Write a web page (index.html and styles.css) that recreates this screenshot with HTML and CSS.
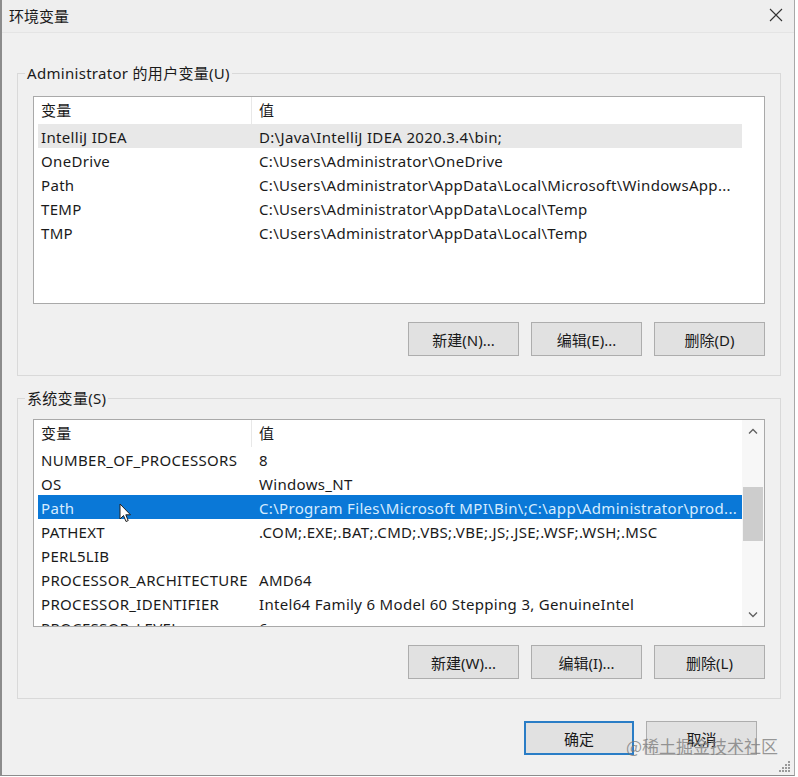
FILE: index.html
```html
<!DOCTYPE html>
<html lang="zh-CN">
<head>
<meta charset="utf-8">
<title>环境变量</title>
<link rel="stylesheet" href="styles.css">
</head>
<body>
<div class="window">
  <div class="titlebar">
    <span class="title">环境变量</span>
    <svg class="close" width="14" height="14" viewBox="0 0 14 14"><path d="M1 1L13 13M13 1L1 13" stroke="#333" stroke-width="1.1" fill="none"/></svg>
  </div>
  <div class="content">
    <fieldset class="group group-user">
      <legend>Administrator 的用户变量(U)</legend>
      <div class="listbox list-user">
        <div class="rows">
          <div class="row header"><span class="name">变量</span><span class="value">值</span></div>
          <div class="row hover"><span class="name">IntelliJ IDEA</span><span class="value">D:\Java\IntelliJ IDEA 2020.3.4\bin;</span></div>
          <div class="row"><span class="name">OneDrive</span><span class="value">C:\Users\Administrator\OneDrive</span></div>
          <div class="row"><span class="name">Path</span><span class="value">C:\Users\Administrator\AppData\Local\Microsoft\WindowsApp...</span></div>
          <div class="row"><span class="name">TEMP</span><span class="value">C:\Users\Administrator\AppData\Local\Temp</span></div>
          <div class="row"><span class="name">TMP</span><span class="value">C:\Users\Administrator\AppData\Local\Temp</span></div>
        </div>
        <div class="scroll-space"></div>
      </div>
      <div class="buttons">
        <button class="btn">新建(N)...</button>
        <button class="btn">编辑(E)...</button>
        <button class="btn">删除(D)</button>
      </div>
    </fieldset>

    <fieldset class="group group-sys">
      <legend>系统变量(S)</legend>
      <div class="listbox list-sys">
        <div class="rows">
          <div class="row header"><span class="name">变量</span><span class="value">值</span></div>
          <div class="row"><span class="name">NUMBER_OF_PROCESSORS</span><span class="value">8</span></div>
          <div class="row"><span class="name">OS</span><span class="value">Windows_NT</span></div>
          <div class="row selected"><span class="name">Path</span><span class="value">C:\Program Files\Microsoft MPI\Bin\;C:\app\Administrator\prod...</span></div>
          <div class="row"><span class="name">PATHEXT</span><span class="value">.COM;.EXE;.BAT;.CMD;.VBS;.VBE;.JS;.JSE;.WSF;.WSH;.MSC</span></div>
          <div class="row"><span class="name">PERL5LIB</span><span class="value"></span></div>
          <div class="row"><span class="name">PROCESSOR_ARCHITECTURE</span><span class="value">AMD64</span></div>
          <div class="row"><span class="name">PROCESSOR_IDENTIFIER</span><span class="value">Intel64 Family 6 Model 60 Stepping 3, GenuineIntel</span></div>
          <div class="row"><span class="name">PROCESSOR_LEVEL</span><span class="value">6</span></div>
        </div>
        <div class="scrollbar">
          <svg class="arrow" width="20" height="22" viewBox="0 0 20 22"><path d="M6 13.5L10 9.5L14 13.5" stroke="#606060" stroke-width="1.3" fill="none"/></svg>
          <div class="track"><div class="thumb"></div></div>
          <svg class="arrow" width="20" height="22" viewBox="0 0 20 22"><path d="M6 8.5L10 12.5L14 8.5" stroke="#606060" stroke-width="1.3" fill="none"/></svg>
        </div>
      </div>
      <div class="buttons">
        <button class="btn">新建(W)...</button>
        <button class="btn">编辑(I)...</button>
        <button class="btn">删除(L)</button>
      </div>
    </fieldset>

    <div class="dialog-buttons">
      <button class="btn btn-default">确定</button>
      <button class="btn btn-cancel">取消</button>
    </div>
  </div>

  <svg class="cursor" width="13" height="20" viewBox="0 0 13 20"><path d="M1 1L1 16L4.5 12.5L7 18.5L9.2 17.6L6.8 11.8L11.5 11.8Z" fill="#fff" stroke="#222" stroke-width="1" stroke-linejoin="round"/></svg>
  <svg class="grip" width="12" height="12" viewBox="0 0 12 12" fill="#9a9a9a">
    <rect x="9" y="1" width="2" height="2"/>
    <rect x="6" y="4" width="2" height="2"/><rect x="9" y="4" width="2" height="2"/>
    <rect x="3" y="7" width="2" height="2"/><rect x="6" y="7" width="2" height="2"/><rect x="9" y="7" width="2" height="2"/>
    <rect x="0" y="10" width="2" height="2"/><rect x="3" y="10" width="2" height="2"/><rect x="6" y="10" width="2" height="2"/><rect x="9" y="10" width="2" height="2"/>
  </svg>
  <div class="watermark">@稀土掘金技术社区</div>
</div>
</body>
</html>
```

FILE: styles.css
```css
* {
  box-sizing: border-box;
}

html, body {
  margin: 0;
  padding: 0;
  background: #ffffff;
}

body {
  font-family: "Noto Sans", "Noto Sans CJK SC", sans-serif;
  font-size: 15px;
  color: #1a1a1a;
}

.window {
  position: relative;
  width: 795px;
  height: 776px;
  background: #f0f0f0;
  border-left: 2px solid #8c8c8c;
  border-right: 1px solid #a8a8a8;
  border-bottom: 1px solid #8c8c8c;
  display: flex;
  flex-direction: column;
}

.titlebar {
  height: 33px;
  flex: none;
  display: flex;
  align-items: center;
  justify-content: space-between;
  padding: 0 11px 2px 7px;
  background: #eeeeee;
  border-bottom: 1px solid #e4e4e4;
}

.title {
  font-size: 15px;
  color: #1a1a1a;
}

.close {
  display: block;
}

.content {
  padding: 30px 13px 0 15px;
  display: flex;
  flex-direction: column;
}

.group {
  margin: 0;
  padding: 0 15px 19px 15px;
  border: 1px solid #d9d9d9;
  min-width: 0;
}

.group legend {
  margin-left: -8px;
  padding: 0 2px;
  line-height: 20px;
  font-size: 15px;
  letter-spacing: 0.3px;
}

.group-sys {
  margin-top: 12px;
}

.listbox {
  height: 208px;
  border: 1px solid #a9a9a9;
  background: #ffffff;
  display: flex;
  overflow: hidden;
}

.list-user {
  margin-top: 13px;
}

.list-sys {
  margin-top: 11px;
}

.rows {
  flex: 1;
  min-width: 0;
  padding-left: 4px;
  overflow: hidden;
  letter-spacing: 0.32px;
}

.row {
  display: flex;
  height: 24px;
  padding-top: 1px;
  align-items: center;
  white-space: nowrap;
}

.row.header {
  height: 27px;
  padding-top: 0;
  align-items: stretch;
}

.row .name {
  flex: none;
  width: 214px;
  padding-left: 3px;
  overflow: hidden;
}

.row .value {
  flex: 1;
  min-width: 0;
  padding-left: 7px;
  overflow: hidden;
}

.row.header .name,
.row.header .value {
  line-height: 27px;
}

.row.header .name {
  border-right: 1px solid #e8e8e8;
}

.row.hover {
  background: #e8e8e8;
}

.row.selected {
  background: #0a78d7;
  color: #d6ecff;
}

.scroll-space {
  flex: none;
  width: 22px;
}

.scrollbar {
  flex: none;
  width: 22px;
  padding: 0 1px 0 1px;
  display: flex;
  flex-direction: column;
  background: #f7f7f7;
}

.arrow {
  display: block;
  flex: none;
}

.track {
  flex: 1;
  padding-top: 45px;
}

.thumb {
  height: 54px;
  background: #cdcdcd;
}

.buttons {
  display: flex;
  justify-content: flex-end;
  gap: 12px;
  margin-top: 18px;
}

.btn {
  width: 111px;
  height: 34px;
  padding: 0;
  font-family: "Noto Sans", "Noto Sans CJK SC", sans-serif;
  font-size: 15px;
  color: #1a1a1a;
  background: #e1e1e1;
  border: 1px solid #adadad;
}

.dialog-buttons {
  display: flex;
  justify-content: flex-end;
  gap: 12px;
  margin-top: 22px;
  padding-right: 24px;
}

.btn-default {
  width: 110px;
  border: 2px solid #2a7dc6;
}

.cursor {
  position: absolute;
  left: 117px;
  top: 503px;
}

.grip {
  position: absolute;
  right: 3px;
  bottom: 3px;
}

.watermark {
  position: absolute;
  left: 624px;
  top: 733px;
  font-size: 17px;
  color: rgba(120, 120, 120, 0.75);
  white-space: nowrap;
  font-family: "Noto Sans CJK SC", sans-serif;
}
```
